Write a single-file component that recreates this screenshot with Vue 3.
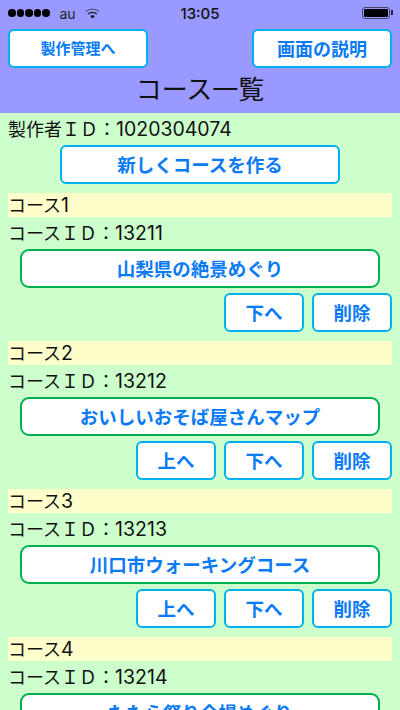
<template>
  <div class="screen">
    <header class="top">
      <div class="status">
        <div class="status-left">
          <span class="dots"><i v-for="n in 5" :key="n"></i></span>
          <span class="carrier">au</span>
          <svg class="wifi" width="15" height="11" viewBox="0 0 15 11">
            <path d="M.8 3.6C4.6.2 10.4.2 14.2 3.6" fill="none" stroke="#55557f" stroke-width="1.3" />
            <path d="M3 6C5.6 3.9 9.4 3.9 12 6" fill="none" stroke="#222" stroke-width="1.4" />
            <path d="M5.2 8C6.6 6.9 8.4 6.9 9.8 8L7.5 10.4z" fill="#111" />
          </svg>
        </div>
        <span class="time">13:05</span>
        <div class="battery"><span></span></div>
      </div>
      <div class="top-buttons">
        <button class="btn btn-small">製作管理へ</button>
        <button class="btn btn-help">画面の説明</button>
      </div>
      <h1 class="title">コース一覧</h1>
    </header>

    <main class="list">
      <div class="line maker">製作者ＩＤ：<span class="num">1020304074</span></div>
      <button class="btn btn-new">新しくコースを作る</button>

      <section v-for="(course, i) in courses" :key="course.id" class="course">
        <div class="course-head">コース<span class="num">{{ i + 1 }}</span></div>
        <div class="line">コースＩＤ：<span class="num">{{ course.id }}</span></div>
        <button class="btn-course">{{ course.name }}</button>
        <div class="actions">
          <button v-if="i > 0" class="btn btn-act">上へ</button>
          <button class="btn btn-act">下へ</button>
          <button class="btn btn-act">削除</button>
        </div>
      </section>
    </main>
  </div>
</template>

<script setup>
const courses = [
  { id: 13211, name: '山梨県の絶景めぐり' },
  { id: 13212, name: 'おいしいおそば屋さんマップ' },
  { id: 13213, name: '川口市ウォーキングコース' },
  { id: 13214, name: 'たたら祭り会場めぐり' }
]
</script>

<style>
html, body {
  margin: 0;
  overflow: hidden;
}
</style>

<style scoped>
.screen {
  width: 400px;
  height: 710px;
  overflow: hidden;
  background: #ccffcc;
  font-family: Inter, "Noto Sans CJK JP", sans-serif;
  color: #111;
}

.top {
  background: #9999ff;
  height: 113px;
}

.status {
  display: flex;
  align-items: center;
  justify-content: space-between;
  height: 26px;
  padding: 0 7px 0 8px;
  position: relative;
}

.status-left {
  display: flex;
  align-items: center;
}

.dots {
  display: flex;
  gap: 1px;
}

.dots i {
  width: 7.5px;
  height: 7.5px;
  border-radius: 50%;
  background: #000;
}

.carrier {
  font-size: 14px;
  margin-left: 10px;
  color: #222;
}

.wifi {
  margin-left: 9px;
}

.time {
  position: absolute;
  left: 0;
  right: 0;
  text-align: center;
  font-size: 15px;
  font-weight: 500;
  color: #111;
}

.battery {
  width: 28px;
  height: 12px;
  border: 1px solid #44446a;
  border-radius: 3px;
  padding: 1px;
  box-sizing: border-box;
  position: relative;
  margin-right: 3px;
}

.battery span {
  display: block;
  height: 100%;
  background: #000;
  border-radius: 1px;
}

.battery::after {
  content: "";
  position: absolute;
  right: -4px;
  top: 2px;
  width: 2px;
  height: 5px;
  background: #222244;
}

.top-buttons {
  display: flex;
  justify-content: space-between;
  padding: 3px 8px 0;
}

.btn {
  display: block;
  box-sizing: border-box;
  background: #fff;
  border: 2px solid #00b0f0;
  border-radius: 6px;
  color: #0a7bf5;
  font-family: inherit;
  font-weight: bold;
  padding: 0 0 2px;
}

.btn-small {
  width: 140px;
  height: 39px;
  font-size: 15px;
}

.btn-help {
  width: 140px;
  height: 39px;
  font-size: 18px;
}

.title {
  margin: 0;
  padding-top: 3px;
  font-size: 26px;
  line-height: 38px;
  font-weight: normal;
  text-align: center;
  color: #111;
}

.list {
  padding: 0 8px;
}

.line {
  font-size: 18px;
  line-height: 26px;
  height: 24px;
}

.num {
  font-size: 19.5px;
  line-height: 1;
}

.maker {
  padding-top: 4px;
}

.btn-new {
  width: 280px;
  height: 39px;
  margin: 4px auto 9px;
  font-size: 18.5px;
}

.course {
  margin-bottom: 9px;
}

.course-head {
  background: #ffffcc;
  height: 24px;
  line-height: 26px;
  font-size: 18px;
  margin-bottom: 4px;
}

.btn-course {
  display: block;
  box-sizing: border-box;
  width: 360px;
  height: 39px;
  margin: 4px auto 5px;
  background: #fff;
  border: 2px solid #00b050;
  border-radius: 9px;
  color: #0a7bf5;
  font-family: inherit;
  font-size: 18.5px;
  font-weight: bold;
  padding: 0 0 2px;
}

.actions {
  display: flex;
  justify-content: flex-end;
  gap: 8px;
}

.btn-act {
  width: 80px;
  height: 39px;
  font-size: 18.5px;
}
</style>
